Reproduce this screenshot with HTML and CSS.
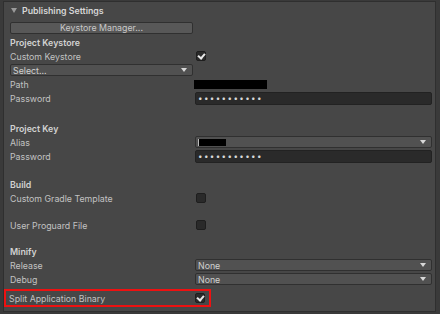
FILE: index.html
```html
<!DOCTYPE html>
<html lang="en">
<head>
    <meta charset="UTF-8">
    <title>Publishing Settings</title>
    <link rel="stylesheet" href="styles.css">
</head>
<body>
<div class="panel">
    <div class="foldout"><span class="fold-arrow"></span>Publishing Settings</div>

    <div class="row">
        <button class="wide-button">Keystore Manager...</button>
    </div>

    <div class="row header">Project Keystore</div>
    <div class="row">
        <span class="label">Custom Keystore</span>
        <span class="checkbox checked"></span>
    </div>
    <div class="row">
        <div class="popup short"><span>Select...</span><span class="popup-arrow"></span></div>
    </div>
    <div class="row">
        <span class="label">Path</span>
        <span class="redacted path-redacted"></span>
    </div>
    <div class="row">
        <span class="label">Password</span>
        <div class="text-field">&bull;&bull;&bull;&bull;&bull;&bull;&bull;&bull;&bull;&bull;&bull;</div>
    </div>

    <div class="row header gap-16">Project Key</div>
    <div class="row">
        <span class="label">Alias</span>
        <div class="popup value"><span class="redacted alias-redacted"></span><span class="popup-arrow"></span></div>
    </div>
    <div class="row">
        <span class="label">Password</span>
        <div class="text-field">&bull;&bull;&bull;&bull;&bull;&bull;&bull;&bull;&bull;&bull;&bull;</div>
    </div>

    <div class="row header gap-14">Build</div>
    <div class="row">
        <span class="label">Custom Gradle Template</span>
        <span class="checkbox"></span>
    </div>
    <div class="row gap-13">
        <span class="label">User Proguard File</span>
        <span class="checkbox"></span>
    </div>

    <div class="row header gap-12">Minify</div>
    <div class="row">
        <span class="label">Release</span>
        <div class="popup value"><span>None</span><span class="popup-arrow"></span></div>
    </div>
    <div class="row">
        <span class="label">Debug</span>
        <div class="popup value"><span>None</span><span class="popup-arrow"></span></div>
    </div>

    <div class="highlight">
        <div class="row">
            <span class="label">Split Application Binary</span>
            <span class="checkbox checked"></span>
        </div>
    </div>
</div>
</body>
</html>
```

FILE: styles.css
```css
body {
    margin: 0;
    background-color: #3a3a3a;
    font-family: Inter, "Noto Sans", sans-serif;
    font-size: 8.8px;
    color: #c2c2c2;
    height: 314px;
    overflow: hidden;
}

.panel {
    margin: 1px 4px 0 3px;
    height: 311px;
    box-sizing: border-box;
    background-color: #474747;
    border: 1px solid #2f2f2f;
    padding: 1px 2px 0 5px;
}

.foldout {
    height: 14px;
    display: flex;
    align-items: center;
    font-weight: 600;
    color: #d6d6d6;
    margin-bottom: 4px;
}

.fold-arrow {
    width: 0;
    height: 0;
    border-left: 3px solid transparent;
    border-right: 3px solid transparent;
    border-top: 5px solid #9a9a9a;
    margin: 0 5px 0 2px;
}

.row {
    height: 14px;
    display: flex;
    align-items: center;
    padding-left: 1px;
}

.header {
    font-weight: 600;
    color: #d2d2d2;
}

.gap-16 { margin-top: 16px; }
.gap-14 { margin-top: 14px; }
.gap-13 { margin-top: 13px; }
.gap-12 { margin-top: 12px; }

.label {
    width: 185px;
    flex-shrink: 0;
}

.wide-button {
    width: 183px;
    height: 12px;
    padding: 0;
    font-family: Inter, "Noto Sans", sans-serif;
    font-size: 8.8px;
    color: #c8c8c8;
    background-color: #585858;
    border: 1px solid #303030;
    border-radius: 2px;
    line-height: 10px;
}

.checkbox {
    width: 10px;
    height: 10px;
    box-sizing: border-box;
    margin-left: 1px;
    background-color: #2a2a2a;
    border: 1px solid #1e1e1e;
    border-radius: 2px;
    position: relative;
}

.checked::after {
    content: "";
    position: absolute;
    left: 2px;
    top: 0;
    width: 3px;
    height: 5px;
    border-right: 2px solid #e8e8e8;
    border-bottom: 2px solid #e8e8e8;
    transform: rotate(40deg);
}

.popup {
    height: 12px;
    box-sizing: border-box;
    display: flex;
    align-items: center;
    justify-content: space-between;
    background-color: #515151;
    border: 1px solid #303030;
    border-radius: 2px;
    padding: 0 5px 0 2px;
    color: #d0d0d0;
}

.popup.short {
    width: 183px;
}

.popup.value {
    width: 237px;
}

.popup-arrow {
    width: 0;
    height: 0;
    border-left: 3px solid transparent;
    border-right: 3px solid transparent;
    border-top: 4px solid #d8d8d8;
}

.text-field {
    width: 237px;
    height: 13px;
    box-sizing: border-box;
    background-color: #2a2a2a;
    border: 1px solid #222;
    border-radius: 2px;
    padding-left: 2px;
    font-size: 8px;
    letter-spacing: 1.4px;
    line-height: 11px;
    color: #d8d8d8;
}

.redacted {
    display: block;
    background-color: #000;
}

.path-redacted {
    width: 73px;
    height: 9px;
    margin-left: -1px;
}

.alias-redacted {
    width: 27px;
    height: 7px;
    border-left: 1px solid #bbb;
}

.highlight {
    margin: 3px 0 0 -5px;
    width: 207px;
    height: 18px;
    box-sizing: border-box;
    border: 2px solid #ee1111;
    padding: 0 0 0 2px;
    display: flex;
    align-items: center;
}
```
